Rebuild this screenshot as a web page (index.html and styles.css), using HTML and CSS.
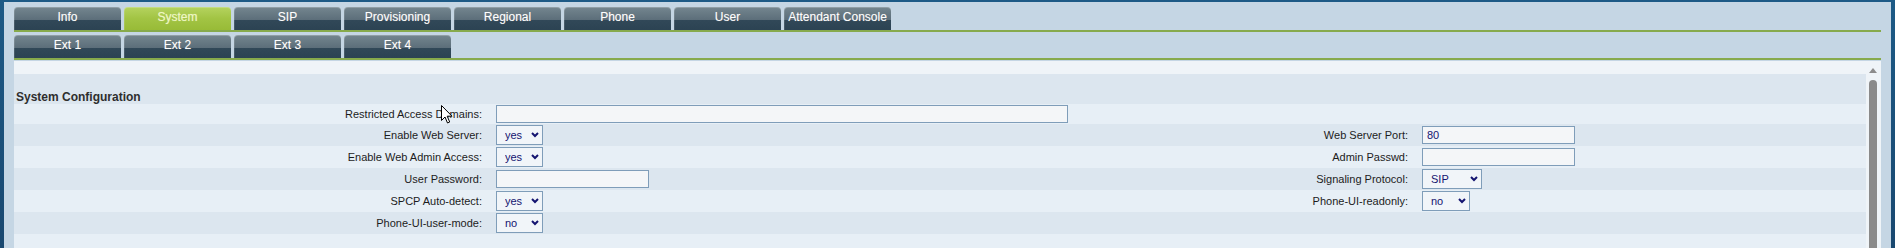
FILE: index.html
```html
<!DOCTYPE html>
<html lang="en">
<head>
    <meta charset="UTF-8">
    <title>System Configuration</title>
    <link rel="stylesheet" href="styles.css">
</head>
<body>
    <div class="window">
        <nav class="tabs">
            <a class="tab">Info</a>
            <a class="tab active">System</a>
            <a class="tab">SIP</a>
            <a class="tab">Provisioning</a>
            <a class="tab">Regional</a>
            <a class="tab">Phone</a>
            <a class="tab">User</a>
            <a class="tab">Attendant Console</a>
        </nav>
        <nav class="tabs sub-tabs">
            <a class="tab">Ext 1</a>
            <a class="tab">Ext 2</a>
            <a class="tab">Ext 3</a>
            <a class="tab">Ext 4</a>
        </nav>

        <div class="panel">
            <div class="rows">
                <div class="section-title">System Configuration</div>

                <div class="row">
                    <label>Restricted Access Domains:</label>
                    <div class="field"><input class="text wide" type="text"></div>
                    <label></label>
                    <div class="field"></div>
                </div>

                <div class="row">
                    <label>Enable Web Server:</label>
                    <div class="field">
                        <span class="select"><select><option>yes</option><option>no</option></select>
                            <svg width="8" height="6" viewBox="0 0 8 6"><path d="M1 1 L4 4 L7 1" fill="none" stroke="#141470" stroke-width="2"/></svg></span>
                    </div>
                    <label>Web Server Port:</label>
                    <div class="field"><input class="text short" type="text" value="80"></div>
                </div>

                <div class="row">
                    <label>Enable Web Admin Access:</label>
                    <div class="field">
                        <span class="select"><select><option>yes</option><option>no</option></select>
                            <svg width="8" height="6" viewBox="0 0 8 6"><path d="M1 1 L4 4 L7 1" fill="none" stroke="#141470" stroke-width="2"/></svg></span>
                    </div>
                    <label>Admin Passwd:</label>
                    <div class="field"><input class="text short" type="password"></div>
                </div>

                <div class="row">
                    <label>User Password:</label>
                    <div class="field"><input class="text short" type="password"></div>
                    <label>Signaling Protocol:</label>
                    <div class="field">
                        <span class="select"><select class="proto"><option>SIP</option><option>SPCP</option></select>
                            <svg width="8" height="6" viewBox="0 0 8 6"><path d="M1 1 L4 4 L7 1" fill="none" stroke="#141470" stroke-width="2"/></svg></span>
                    </div>
                </div>

                <div class="row">
                    <label>SPCP Auto-detect:</label>
                    <div class="field">
                        <span class="select"><select><option>yes</option><option>no</option></select>
                            <svg width="8" height="6" viewBox="0 0 8 6"><path d="M1 1 L4 4 L7 1" fill="none" stroke="#141470" stroke-width="2"/></svg></span>
                    </div>
                    <label>Phone-UI-readonly:</label>
                    <div class="field">
                        <span class="select"><select class="ro"><option>no</option><option>yes</option></select>
                            <svg width="8" height="6" viewBox="0 0 8 6"><path d="M1 1 L4 4 L7 1" fill="none" stroke="#141470" stroke-width="2"/></svg></span>
                    </div>
                </div>

                <div class="row">
                    <label>Phone-UI-user-mode:</label>
                    <div class="field">
                        <span class="select"><select><option>no</option><option>yes</option></select>
                            <svg width="8" height="6" viewBox="0 0 8 6"><path d="M1 1 L4 4 L7 1" fill="none" stroke="#141470" stroke-width="2"/></svg></span>
                    </div>
                    <label></label>
                    <div class="field"></div>
                </div>

                <div class="row empty"></div>
            </div>

            <div class="scrollbar">
                <span class="arrow-up"></span>
                <span class="thumb"></span>
            </div>

            <svg class="cursor" width="12" height="19" viewBox="0 0 12 19">
                <path d="M0.5 0.5 L0.5 15.5 L4 12 L6.5 18 L8.7 17 L6.2 11.2 L11 11.2 Z" fill="#fff" stroke="#000" stroke-width="1"/>
            </svg>
        </div>
    </div>
</body>
</html>
```

FILE: styles.css
```css
* {
    margin: 0;
    padding: 0;
    box-sizing: border-box;
}

html, body {
    height: 100%;
    overflow: hidden;
}

body {
    font-family: "Liberation Sans", Arial, sans-serif;
    background: linear-gradient(180deg, #1d5a86 0%, #194870 100%);
    padding: 2px 4px 0 4px;
}

.window {
    height: 100%;
    background: #c5d6e4;
    padding: 5px 10px 0;
    display: flex;
    flex-direction: column;
}

/* tab bars */
.tabs {
    display: flex;
    gap: 3px;
    border-bottom: 2px solid #87aa4c;
}

.sub-tabs {
    margin-top: 3px;
}

.tab {
    width: 107px;
    height: 23px;
    line-height: 21px;
    text-align: center;
    color: #fff;
    font-size: 12px;
    border-radius: 4px 4px 0 0;
    background: linear-gradient(180deg, #74868f 0%, #5b6d79 58%, #314858 58%, #2c4353 100%);
    box-shadow: inset 0 1px 0 rgba(255, 255, 255, 0.22), inset 1px 0 0 rgba(255, 255, 255, 0.12);
    text-shadow: 0 0 1px rgba(255, 255, 255, 0.5), 0 0 1px rgba(0, 0, 0, 0.4);
    cursor: pointer;
}

.tab.active {
    background: linear-gradient(180deg, #b5d35f 0%, #a2c444 50%, #98bb37 100%);
    color: #eef6c4;
    text-shadow: 0 0 1px rgba(238, 246, 196, 0.6);
}

/* content panel */
.panel {
    position: relative;
    flex: 1;
    min-height: 0;
    margin-top: 1px;
    display: flex;
    background: #eff4f8;
}

.rows {
    flex: 1;
    padding-top: 13px;
}

.section-title {
    height: 30px;
    padding: 16px 2px 0;
    line-height: 14px;
    font-size: 12px;
    font-weight: bold;
    color: #2e2e2e;
}

.rows > :nth-child(odd) {
    background: #dce6ef;
}

.rows > :nth-child(even) {
    background: #e7eff6;
}

.row {
    display: grid;
    grid-template-columns: 468px 591px 307px 1fr;
    column-gap: 14px;
    align-items: center;
    padding: 1px 0;
}

.row.empty {
    height: 22px;
}

.row label {
    font-size: 11px;
    text-align: right;
    color: #1c1c1c;
}

.field {
    display: flex;
    align-items: center;
}

input.text {
    height: 18px;
    border: 1px solid #7f9db9;
    background: #f4f6f8;
    font: 11px "Liberation Sans", Arial, sans-serif;
    color: #141470;
    padding: 0 4px;
    outline: none;
}

.wide {
    width: 572px;
}

.short {
    width: 153px;
}

.select {
    position: relative;
    display: block;
}

.select select {
    display: block;
    appearance: none;
    -webkit-appearance: none;
    width: 47px;
    height: 20px;
    border: 1px solid #7f9db9;
    border-radius: 0;
    background: #f1f5f9;
    font: 11px "Liberation Sans", Arial, sans-serif;
    color: #141470;
    padding-left: 8px;
    outline: none;
}

.select select.proto {
    width: 60px;
}

.select select.ro {
    width: 48px;
}

.select svg {
    position: absolute;
    right: 4px;
    top: 7px;
    pointer-events: none;
}

/* fake scrollbar */
.scrollbar {
    width: 15px;
    display: flex;
    flex-direction: column;
    padding-top: 7px;
}

.arrow-up {
    width: 0;
    height: 0;
    margin-left: 3px;
    border-left: 4px solid transparent;
    border-right: 4px solid transparent;
    border-bottom: 5px solid #8c8c8c;
}

.thumb {
    flex: 1;
    width: 8px;
    margin: 7px 0 0 3px;
    border-radius: 4px 4px 0 0;
    background: #8a8a8a;
}

.cursor {
    position: absolute;
    left: 427px;
    top: 44px;
    pointer-events: none;
}
```
